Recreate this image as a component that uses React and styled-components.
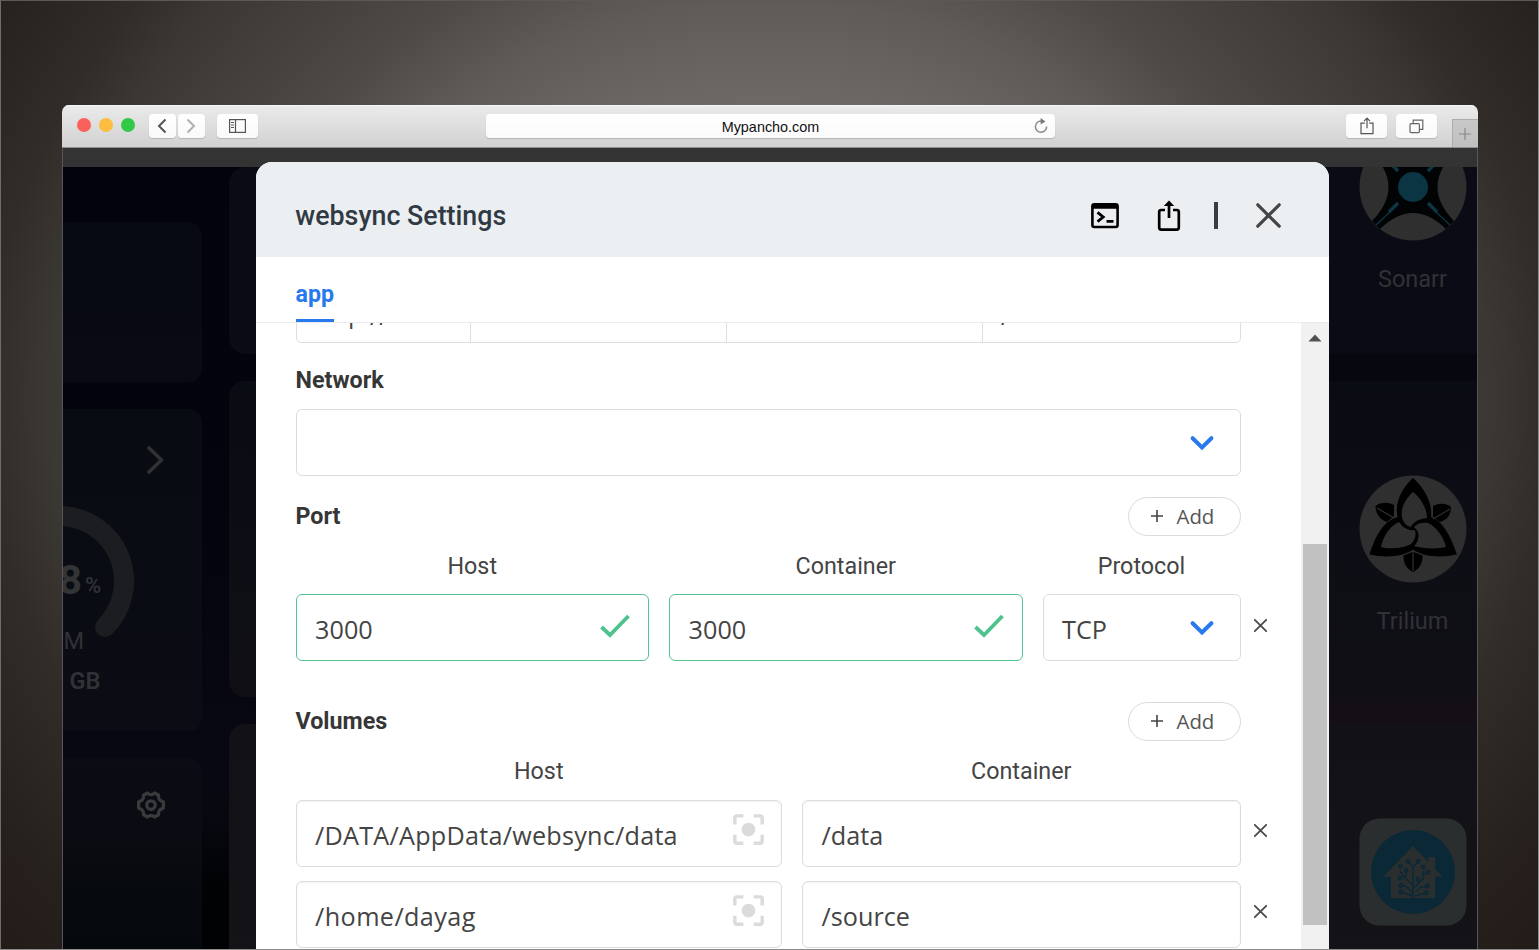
import React from "react";
import styled, { createGlobalStyle } from "styled-components";
import { MdCenterFocusStrong } from "react-icons/md";

const GlobalStyle = createGlobalStyle`
  * { box-sizing: border-box; }
  body { margin: 0; overflow: hidden; font-family: Roboto, "Liberation Sans", sans-serif; }
  svg { display: block; flex: none; }
`;

const Desktop = styled.div`
  width: 1539px;
  height: 950px;
  padding: 104px 60px 0 61px;
  overflow: hidden;
  border: 1px solid #8d8b8a;
  border-top-color: #5b5856;
  border-left-color: #6f6d6b;
  background: radial-gradient(ellipse 900px 780px at 50% 42%, #85817e 0%, #6b6764 40%, #5f5b58 51%, #4e4946 62%, #3b3733 80%, #312c28 87%, #27211e 100%, #221b17 112%);
`;

const Window = styled.div`
  display: flex;
  flex-direction: column;
  width: 1416px;
  height: 844px;
  overflow: hidden;
  border-radius: 7px 7px 0 0;
`;

const Toolbar = styled.header`
  display: flex;
  align-items: center;
  height: 43px;
  flex: none;
  padding-left: 15px;
  background: linear-gradient(#ebebeb, #d1d1d1);
  border-bottom: 1px solid #8f8f8f;
  box-shadow: inset 0 1px 0 #f6f6f6;
`;

const Lights = styled.div`
  display: flex;
  gap: 8px;
  margin: 0 14px 2px 0;
`;

const Light = styled.span`
  width: 14px;
  height: 14px;
  border-radius: 50%;
  background: ${(p) => p.$color};
`;

const ToolButton = styled.div`
  display: flex;
  align-items: center;
  justify-content: center;
  width: ${(p) => p.$width}px;
  height: 24px;
  margin-right: ${(p) => p.$after || 0}px;
  border-radius: 4px;
  background: linear-gradient(#ffffff, #f9f9f9);
  box-shadow: 0 1px 1px rgba(0, 0, 0, 0.16);
`;

const AddressBar = styled.div`
  display: grid;
  grid-template-columns: 29px 1fr 29px;
  align-items: center;
  justify-items: center;
  width: 570px;
  height: 24px;
  margin: 0 291px 0 228px;
  border-radius: 4px;
  background: linear-gradient(#ffffff, #fafafa);
  box-shadow: 0 1px 1px rgba(0, 0, 0, 0.16);
  font: 14.4px "Liberation Sans", Arial, sans-serif;
  color: #111;
`;

const Address = styled.span`
  grid-column: 2;
  padding-top: 1px;
`;

const NewTab = styled.div`
  display: flex;
  align-items: center;
  justify-content: center;
  align-self: flex-end;
  width: 26px;
  height: 28px;
  flex: none;
  background: linear-gradient(#c8c8c8, #c0c0c0);
  border: 1px solid #adadad;
  border-width: 1px 0 0 1px;
`;

const Viewport = styled.main`
  position: relative;
  display: flex;
  flex-direction: column;
  flex: 1;
  min-height: 0;
  border: 1px solid #55555a;
  border-width: 0 1px;
  background: #333;
`;

const Dashboard = styled.div`
  display: grid;
  grid-template-columns: 139px 1fr;
  column-gap: 27px;
  flex: 1;
  min-height: 0;
  margin-top: 19px;
  overflow: hidden;
  background:
    linear-gradient(#06070f 0%, #06070f 30%, #140e15 66%, #150e15 100%) right / 149px 100% no-repeat,
    linear-gradient(#02030d 0%, #04040e 45%, #080813 75%, #07080f 84%, #010204 92%, #010203 100%);
`;

const WidgetColumn = styled.aside`
  display: grid;
  grid-template-rows: 160px 322px 240px;
  row-gap: 27px;
  padding-top: 55px;
`;

const Widget = styled.section`
  display: flex;
  flex-direction: column;
  align-items: flex-end;
  overflow: hidden;
  border-radius: 0 14px 14px 0;
  background: ${(p) => p.$tint};
`;

const WidgetAction = styled.div`
  display: flex;
  margin: ${(p) => p.$top}px ${(p) => p.$right}px 0 0;
`;

const Gauge = styled.div`
  position: relative;
  align-self: stretch;
  height: 136px;
  margin-top: 29px;
`;

const GaugeValue = styled.div`
  position: absolute;
  left: -4.5px;
  top: 53px;
  display: flex;
  align-items: baseline;
  font-size: 41px;
  line-height: 46px;
  font-weight: 700;
  color: #323436;
`;

const Percent = styled.small`
  position: relative;
  top: -1px;
  margin-left: 3px;
  font-size: 22px;
  font-weight: 500;
`;

const GaugeLabel = styled.div`
  align-self: flex-start;
  margin: ${(p) => p.$top}px 0 0 ${(p) => p.$left}px;
  font-size: 23.5px;
  line-height: 30px;
  font-weight: ${(p) => p.$weight};
  color: #303236;
`;

const AppColumn = styled.div`
  display: grid;
  grid-template-rows: 187px 316px 260px;
  row-gap: 27px;
`;

const AppCard = styled.section`
  display: flex;
  flex-direction: column;
  align-items: center;
  padding-left: 1119px;
  border-radius: 16px 0 0 16px;
  background: ${(p) => p.$tint};
  overflow: hidden;
`;

const AppLogo = styled.div`
  margin-top: ${(p) => p.$top}px;
`;

const AppName = styled.div`
  margin-top: 22.5px;
  font-size: 23.5px;
  line-height: 30px;
  color: #313235;
`;

const Overlay = styled.div`
  position: absolute;
  inset: 14px 148px 0 193px;
  display: flex;
`;

const Modal = styled.div`
  display: flex;
  flex-direction: column;
  width: 1073px;
  overflow: hidden;
  border-radius: 16px 16px 0 0;
  background: #fff;
`;

const ModalHeader = styled.header`
  display: flex;
  align-items: center;
  height: 95px;
  flex: none;
  padding: 12px 48px 0 39.3px;
  background: #eceff2;
`;

const Title = styled.h1`
  flex: 1;
  margin: 0;
  font-size: 26.8px;
  font-weight: 500;
  line-height: 32px;
  color: #303a42;
`;

const HeaderIcons = styled.div`
  display: flex;
  align-items: center;
`;

const IconSlot = styled.span`
  margin-left: 38px;
`;

const Divider = styled.span`
  width: 4px;
  height: 27px;
  margin: 0 38px 0 33px;
  background: #3a3e42;
`;

const Tabs = styled.nav`
  display: flex;
  height: 66px;
  flex: none;
  padding-left: 39.5px;
  border-bottom: 1px solid #e8ecee;
`;

const Tab = styled.div`
  height: 65px;
  padding-top: 22px;
  border-bottom: 3px solid #2878ee;
  font-size: 23.2px;
  font-weight: 700;
  line-height: 30px;
  color: #2878ee;
`;

const Body = styled.div`
  display: flex;
  flex: 1;
  min-height: 0;
`;

const Form = styled.div`
  flex: 1;
  overflow: hidden;
  padding: 0 0 0 39.5px;
`;

const Scrollbar = styled.div`
  display: flex;
  flex-direction: column;
  align-items: center;
  width: 28px;
  padding-top: 11px;
  background: #f1f1f1;
`;

const Thumb = styled.div`
  width: 24px;
  height: 381px;
  margin-top: 202px;
  background: #c1c1c1;
`;

const UrlGroup = styled.div`
  display: grid;
  grid-template-columns: 173.5px 256px 256px 257.5px;
  width: 945px;
  height: 67px;
  margin-top: -47px;
  border: 1px solid #dedede;
  border-radius: 5px;
`;

const UrlCell = styled.div`
  display: flex;
  align-items: center;
  padding: 7px 0 0 18px;
  border-left: ${(p) => (p.$first ? 0 : 1)}px solid #dedede;
  font: 25.2px "Open Sans", "Noto Sans", sans-serif;
  color: #444;
`;

const Slash = styled.span`
  padding-top: 4px;
`;

const SectionTitle = styled.h2`
  margin: 0;
  padding-bottom: 2px;
  font-size: 23.3px;
  font-weight: 700;
  line-height: 28px;
  color: #363636;
`;

const NetworkHead = styled.div`
  padding: 23px 0 13px;
`;

const SectionHead = styled.div`
  display: flex;
  align-items: center;
  justify-content: space-between;
  width: 945px;
  height: 39px;
  margin-top: ${(p) => p.$top}px;
`;

const AddButton = styled.button`
  display: flex;
  align-items: center;
  width: 113px;
  height: 39px;
  padding: 0 0 2px 22px;
  border: 1px solid #dbdbdb;
  border-radius: 20px;
  background: #fff;
  font: 20.4px "Open Sans", "Noto Sans", sans-serif;
  color: #555;
`;

const AddText = styled.span`
  margin-left: 14px;
`;

const FieldGrid = styled.div`
  display: grid;
  grid-template-columns: ${(p) => p.$columns};
  column-gap: 20px;
  margin-top: ${(p) => p.$top || 0}px;
`;

const portColumns = "353.5px 353.5px 198px 12px";
const volumeColumns = "486.5px 438.5px 12px";

const ColumnLabel = styled.div`
  text-align: center;
  font-size: 23.3px;
  line-height: 30px;
  color: #444;
`;

const borders = { valid: "#54c492", plain: "#dcdcdc" };

const Field = styled.div`
  display: flex;
  align-items: center;
  justify-content: space-between;
  width: ${(p) => p.$width || "auto"};
  height: 67px;
  padding: 0 ${(p) => p.$right || 18}px 0 18.6px;
  border: 1px solid ${(p) => borders[p.$kind || "plain"]};
  border-radius: 6px;
  background: #fff;
  box-shadow: ${(p) => (p.$inset ? "inset 0 1px 2px rgba(10, 10, 10, 0.05)" : "none")};
`;

const Value = styled.span`
  padding-top: 2px;
  font: 25.2px/34px "Open Sans", "Noto Sans", sans-serif;
  letter-spacing: ${(p) => p.$track || 0}px;
  color: #444;
`;

const Raise = styled.span`
  padding-bottom: ${(p) => p.$by}px;
`;

const Remove = styled.div`
  display: flex;
  align-items: center;
  height: ${(p) => p.$height}px;
  margin-left: -8px;
`;

const ChevronDown = () => (
  <svg width="26" height="18" viewBox="0 0 26 18" fill="none" stroke="#2878ee" strokeWidth="4">
    <path d="M3.6 4.2 13 13.4 22.4 4.2" strokeLinecap="round" strokeLinejoin="miter" />
  </svg>
);

const Check = () => (
  <svg width="30" height="24" viewBox="0 0 30 24" fill="none" stroke="#4fc38f" strokeWidth="3.8">
    <path d="M1.5 13 10 21 28.5 2" />
  </svg>
);

const Cross = ({ size, width, color }) => (
  <svg width={size} height={size} viewBox={`0 0 ${size} ${size}`} stroke={color} strokeWidth={width} strokeLinecap="round">
    <path d={`M1.8 1.8 ${size - 1.8} ${size - 1.8}M${size - 1.8} 1.8 1.8 ${size - 1.8}`} />
  </svg>
);

const TerminalIcon = () => (
  <svg width="28" height="26" viewBox="0 0 28 26" fill="none" stroke="#000">
    <rect x="1.4" y="1.4" width="25.2" height="22.6" rx="2" strokeWidth="2.6" />
    <path d="M1.5 3.4H26.5" strokeWidth="4.6" />
    <path d="M6.5 9.4 12.2 14 6.5 18.6" strokeWidth="2.8" />
    <path d="M15.5 18.4H22.5" strokeWidth="2.6" />
  </svg>
);

const ShareIcon = () => (
  <svg width="24" height="32" viewBox="0 0 24 32" fill="none" stroke="#000" strokeWidth="2.7">
    <path d="M8 10H4.2Q2.2 10 2.2 12V27.6Q2.2 29.6 4.2 29.6H19.8Q21.8 29.6 21.8 27.600V12Q21.8 10 19.8 10H16" />
    <path d="M12 18V4" />
    <path d="M12 .4 17.2 6H6.8Z" fill="#000" stroke="none" />
  </svg>
);

const NavChevron = ({ d, color }) => (
  <svg width="12" height="16" viewBox="0 0 12 16" fill="none" stroke={color} strokeWidth="2">
    <path d={d} />
  </svg>
);

const SidebarIcon = () => (
  <svg width="17" height="14" viewBox="0 0 17 14" fill="none" stroke="#555">
    <rect x=".6" y=".6" width="15.8" height="12.8" strokeWidth="1.2" />
    <path d="M6.5 1V13" strokeWidth="1.2" />
    <path d="M2 3.5H5M2 6H5M2 8.5H5" />
  </svg>
);

const ReloadIcon = () => (
  <svg width="14" height="16" viewBox="0 0 14 16" fill="none" stroke="#8a8a8a" strokeWidth="1.5">
    <path d="M7.6 3.1H7A5.6 5.6 0 1 0 12.6 8.6" />
    <path d="M6.6 0 11.4 3.4 6.6 6.4Z" fill="#777" stroke="none" />
  </svg>
);

const SafariShare = () => (
  <svg width="14" height="18" viewBox="0 0 14 18" fill="none" stroke="#555" strokeWidth="1.2">
    <path d="M4.8 6.2H1V16.6H13V6.2H9.2M7 11.2V1.2M4 4.2 7 1.2 10 4.2" />
  </svg>
);

const TabsIcon = () => (
  <svg width="15" height="15" viewBox="0 0 15 15" fill="none" stroke="#666" strokeWidth="1.2">
    <rect x="1" y="4.6" width="9.4" height="9" rx="1" />
    <path d="M4.2 4.4V1.2H13.8V10.4H10.6" />
  </svg>
);

const PlusIcon = ({ size, color, width }) => (
  <svg width={size} height={size} viewBox="0 0 12 12" stroke={color} strokeWidth={width}>
    <path d="M6 0V12M0 6H12" />
  </svg>
);

const GearIcon = () => (
  <svg width="30" height="30" viewBox="0 0 24 24" fill="none" stroke="#393a3b" strokeWidth="2.6" strokeLinejoin="round">
    <path d="M9.2 2.4 11 3.6H13L14.8 2.4 18 4.2 18.1 6.4 19.2 8.2 21.9 9.6V14.4L19.2 15.8 18.1 17.6 18 19.8 14.8 21.6 13 20.4H11L9.2 21.6 6 19.8 5.9 17.6 4.8 15.8 2.1 14.4V9.6L4.8 8.2 5.9 6.4 6 4.2Z" />
    <circle cx="12" cy="12" r="3.4" />
  </svg>
);

const SonarrLogo = () => (
  <svg width="108" height="108" viewBox="-54 -54 108 108">
    <circle r="53.5" fill="#2f2f2f" />
    <path d="M-41 34Q-8 0-41-34L-33-42Q0-10 33-42L41-34Q8 0 41 34L33 42Q0 10-33 42Z" fill="#020304" />
    <g stroke="#0e3642" fill="none">
      <path d="M-15 16-24 25M15 16 24 25M-15-16-24-25M15-16 24-25" strokeWidth="3.4" />
      <path d="M-22 24-37 38M22 24 37 38M-22-24-37-38M22-24 37-38" strokeWidth="1.3" />
    </g>
    <circle r="15" fill="#0c3543" />
  </svg>
);

const TriliumLogo = () => (
  <svg width="108" height="108" viewBox="-54 -54 108 108">
    <circle r="53.5" fill="#2f2f2f" />
    <path d="M0-51C-9-43-19-28-15.5-12-30-8-38 8-43.5 25.5-28 29-10 28 0 20.5 10 28 28 29 44 25.5 38 8 30-8 18-12 20-28 9-43 0-51Z" fill="#000" />
    <path d="M0-37C-7-31-13-20-11-12-10-7-7-3-2-2Q-1-5 0-5 4-10 14-11C14-20 8-31 0-37Z" fill="#2f2f2f" />
    <path d="M-14-7C-22-4-30 7-32 18-26 20-10 20-2 15 3 10 3 5 2 1-4 2-10-1-14-7Z" fill="#2f2f2f" />
    <path d="M1-2C4-6 10-7 15-6 24-2 31 9 33 18 26 20 10 20 1 17 6 13 7 4 3 0Z" fill="#2f2f2f" />
    <path d="M-9.5 26.5-2 23.5H2L9.5 26.5C10 35 5 41 0 43-5 41-10 35-9.5 26.5Z" fill="#000" />
    <path d="M-37.5-23C-32-27-25-27-19-24V-13L-26-7C-34-10-37-15-37.5-23ZM38-22C33-26 26-26 20-23V-12L27-7C34-9 38-14 38-22Z" fill="#000" />
    <path d="M0 24V42M-36-21-19-11M37-20 20-10" stroke="#2f2f2f" strokeWidth="1.2" />
  </svg>
);

const HomeAssistantLogo = () => (
  <svg width="108" height="108" viewBox="-54 -54 108 108">
    <rect x="-53.5" y="-53.5" width="107" height="107" rx="20" fill="#2b2e2e" />
    <circle r="42" fill="#0b2836" />
    <path d="M0-26-29.5 4.5H-22V26H22V4.5H29.5L22-3V-15H15.5V-10Z" fill="#2b2e2e" />
    <g fill="none" stroke="#0b2836" strokeWidth="1.5">
      <path d="M0 26V-5L-4-9M0-5 4-9M0 13-8 6-13-1M-7 5V-1M0 17 10 7V-1M0 24-12 20M0 21-7 14H-11M2 24 12 21M3 20 8 15H13M10 3 15 0M5 12V8" />
      {[[-5, -10.5], [5, -10.5], [-12.5, -6], [10, -5], [-7, -1.5], [15, 0], [-13, 6], [5, 7], [-12, 13.5], [-12, 20], [14.5, 14], [13, 21]].map(([cx, cy]) => (
        <circle key={`${cx},${cy}`} cx={cx} cy={cy} r="1.7" fill="#1f2b2f" />
      ))}
    </g>
  </svg>
);

const volumes = [
  { host: "/DATA/AppData/websync/data", track: 0.24, container: "/data" },
  { host: "/home/dayag", track: 0.4, container: "/source" },
];

const RemoveRow = ({ height }) => (
  <Remove $height={height}>
    <Cross size={15} width={1.8} color="#4a4a4a" />
  </Remove>
);

const AddAction = () => (
  <AddButton>
    <PlusIcon size={12} color="#444" width={1.6} />
    <AddText>Add</AddText>
  </AddButton>
);

const BrowserToolbar = () => (
  <Toolbar>
    <Lights>
      <Light $color="#fb615c" />
      <Light $color="#fcbd40" />
      <Light $color="#33c948" />
    </Lights>
    <ToolButton $width={27} $after={2}><NavChevron d="M9.5 1.5 3 8 9.5 14.5" color="#555" /></ToolButton>
    <ToolButton $width={27} $after={12}><NavChevron d="M2.5 1.5 9 8 2.5 14.5" color="#b0b0b0" /></ToolButton>
    <ToolButton $width={41}><SidebarIcon /></ToolButton>
    <AddressBar>
      <Address>Mypancho.com</Address>
      <ReloadIcon />
    </AddressBar>
    <ToolButton $width={41} $after={9}><SafariShare /></ToolButton>
    <ToolButton $width={41} $after={15}><TabsIcon /></ToolButton>
    <NewTab><PlusIcon size={12} color="#888" width={1.2} /></NewTab>
  </Toolbar>
);

const DashboardPage = () => (
  <Dashboard>
    <WidgetColumn>
      <Widget $tint="linear-gradient(#070a12, #090a14)" />
      <Widget $tint="linear-gradient(#080b12, #090c13 50%, #0c0c14)">
        <WidgetAction $top={36} $right={38}>
          <svg width="18" height="30" viewBox="0 0 18 30" fill="none" stroke="#303132" strokeWidth="3.6" strokeLinecap="round" strokeLinejoin="round">
            <path d="M3 3 15.5 15 3 27" />
          </svg>
        </WidgetAction>
        <Gauge>
          <svg width="74" height="136" viewBox="0 0 74 136" fill="none" stroke="#1b1d20" strokeWidth="20" strokeLinecap="round">
            <path d="M-4 12A65 65 0 0 1 42 123" />
          </svg>
          <GaugeValue>8<Percent>%</Percent></GaugeValue>
        </Gauge>
        <GaugeLabel $top={-14} $left={0.5} $weight={400}>M</GaugeLabel>
        <GaugeLabel $top={10} $left={6.5} $weight={600}>GB</GaugeLabel>
      </Widget>
      <Widget $tint="linear-gradient(#0c0c14, #0a0c12 35%, #06090e 55%, #04070b)">
        <WidgetAction $top={32} $right={36}><GearIcon /></WidgetAction>
      </Widget>
    </WidgetColumn>
    <AppColumn>
      <AppCard $tint="#0a0b14">
        <AppLogo $top={-34}><SonarrLogo /></AppLogo>
        <AppName>Sonarr</AppName>
      </AppCard>
      <AppCard $tint="linear-gradient(#0a0c13, #100f16)">
        <AppLogo $top={94}><TriliumLogo /></AppLogo>
        <AppName>Trilium</AppName>
      </AppCard>
      <AppCard $tint="linear-gradient(#111117, #141317)">
        <AppLogo $top={94}><HomeAssistantLogo /></AppLogo>
      </AppCard>
    </AppColumn>
  </Dashboard>
);

const SettingsModal = () => (
  <Modal>
    <ModalHeader>
      <Title>websync Settings</Title>
      <HeaderIcons>
        <TerminalIcon />
        <IconSlot><ShareIcon /></IconSlot>
        <Divider />
        <Cross size={25} width={3.2} color="#454545" />
      </HeaderIcons>
    </ModalHeader>
    <Tabs><Tab>app</Tab></Tabs>
    <Body>
      <Form>
        <UrlGroup>
          <UrlCell $first>http:<Slash>//</Slash></UrlCell>
          <UrlCell />
          <UrlCell />
          <UrlCell><Slash>/</Slash></UrlCell>
        </UrlGroup>
        <NetworkHead><SectionTitle>Network</SectionTitle></NetworkHead>
        <Field $width="945px" $right={25}><span /><ChevronDown /></Field>

        <SectionHead $top={21}>
          <SectionTitle>Port</SectionTitle>
          <AddAction />
        </SectionHead>
        <FieldGrid $columns={portColumns} $top={15}>
          <ColumnLabel>Host</ColumnLabel>
          <ColumnLabel>Container</ColumnLabel>
          <ColumnLabel>Protocol</ColumnLabel>
        </FieldGrid>
        <FieldGrid $columns={portColumns} $top={13}>
          <Field $kind="valid"><Value>3000</Value><Raise $by={4}><Check /></Raise></Field>
          <Field $kind="valid"><Value>3000</Value><Raise $by={4}><Check /></Raise></Field>
          <Field $right={25}><Value>TCP</Value><ChevronDown /></Field>
          <RemoveRow height={63} />
        </FieldGrid>

        <SectionHead $top={41}>
          <SectionTitle>Volumes</SectionTitle>
          <AddAction />
        </SectionHead>
        <FieldGrid $columns={volumeColumns} $top={15}>
          <ColumnLabel>Host</ColumnLabel>
          <ColumnLabel>Container</ColumnLabel>
        </FieldGrid>
        {volumes.map((v) => (
          <FieldGrid key={v.host} $columns={volumeColumns} $top={14}>
            <Field $inset $right={12}>
              <Value $track={v.track}>{v.host}</Value>
              <Raise $by={8}><MdCenterFocusStrong size={41} color="#dbdbdb" /></Raise>
            </Field>
            <Field $inset><Value>{v.container}</Value></Field>
            <RemoveRow height={61} />
          </FieldGrid>
        ))}
      </Form>
      <Scrollbar>
        <svg width="14" height="8" viewBox="0 0 14 8"><path d="M7 .5 13.5 7.5H.5Z" fill="#505050" /></svg>
        <Thumb />
      </Scrollbar>
    </Body>
  </Modal>
);

export default function App() {
  return (
    <Desktop>
      <GlobalStyle />
      <Window>
        <BrowserToolbar />
        <Viewport>
          <DashboardPage />
          <Overlay><SettingsModal /></Overlay>
        </Viewport>
      </Window>
    </Desktop>
  );
}
